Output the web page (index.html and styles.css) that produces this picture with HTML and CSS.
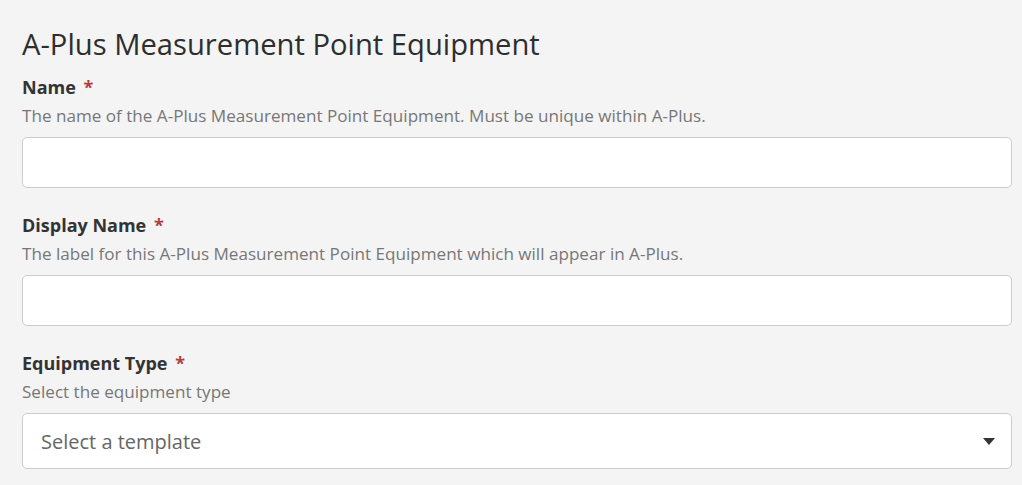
FILE: index.html
```html
<!DOCTYPE html>
<html>
<head>
<meta charset="utf-8">
<link rel="stylesheet" href="styles.css">
</head>
<body>
<div class="page">
  <h1 class="title">A-Plus Measurement Point Equipment</h1>
  <div class="field">
    <div class="label">Name <span class="req">*</span></div>
    <div class="help">The name of the A-Plus Measurement Point Equipment. Must be unique within A-Plus.</div>
    <div class="input"></div>
  </div>
  <div class="field">
    <div class="label">Display Name <span class="req">*</span></div>
    <div class="help">The label for this A-Plus Measurement Point Equipment which will appear in A-Plus.</div>
    <div class="input"></div>
  </div>
  <div class="field">
    <div class="label">Equipment Type <span class="req">*</span></div>
    <div class="help">Select the equipment type</div>
    <div class="select">
      <span class="placeholder">Select a template</span>
      <svg class="caret" width="12" height="7" viewBox="0 0 12 7"><path d="M0 0H12L6 7Z" fill="#333"/></svg>
    </div>
  </div>
</div>
</body>
</html>
```
FILE: styles.css
```css
html, body {
  margin: 0;
  padding: 0;
  background: #f4f4f4;
}
.page {
  padding: 24px 10px 0 22px;
  font-family: "Open Sans", "Noto Sans", sans-serif;
  color: #333;
}
.title {
  margin: 0 0 11px 0;
  font-size: 29.2px;
  font-weight: 500;
  line-height: 40px;
  color: #2e2e2e;
}
.field {
  margin-bottom: 25px;
}
.label {
  font-size: 18px;
  font-weight: 700;
  line-height: 24px;
  color: #333;
}
.req {
  color: #b04040;
  margin-left: 3px;
}
.help {
  font-size: 17.1px;
  line-height: 24px;
  color: #777;
  margin-top: 5px;
  margin-bottom: 9px;
}
.input {
  box-sizing: border-box;
  height: 51px;
  background: #fff;
  border: 1px solid #ccc;
  border-radius: 5px;
}
.select {
  box-sizing: border-box;
  height: 56px;
  background: #fff;
  border: 1px solid #ccc;
  border-radius: 5px;
  display: flex;
  align-items: center;
  justify-content: space-between;
  padding: 0 16px 0 18px;
}
.placeholder {
  font-size: 20px;
  color: #666;
}
.caret {
  display: block;
}
```
